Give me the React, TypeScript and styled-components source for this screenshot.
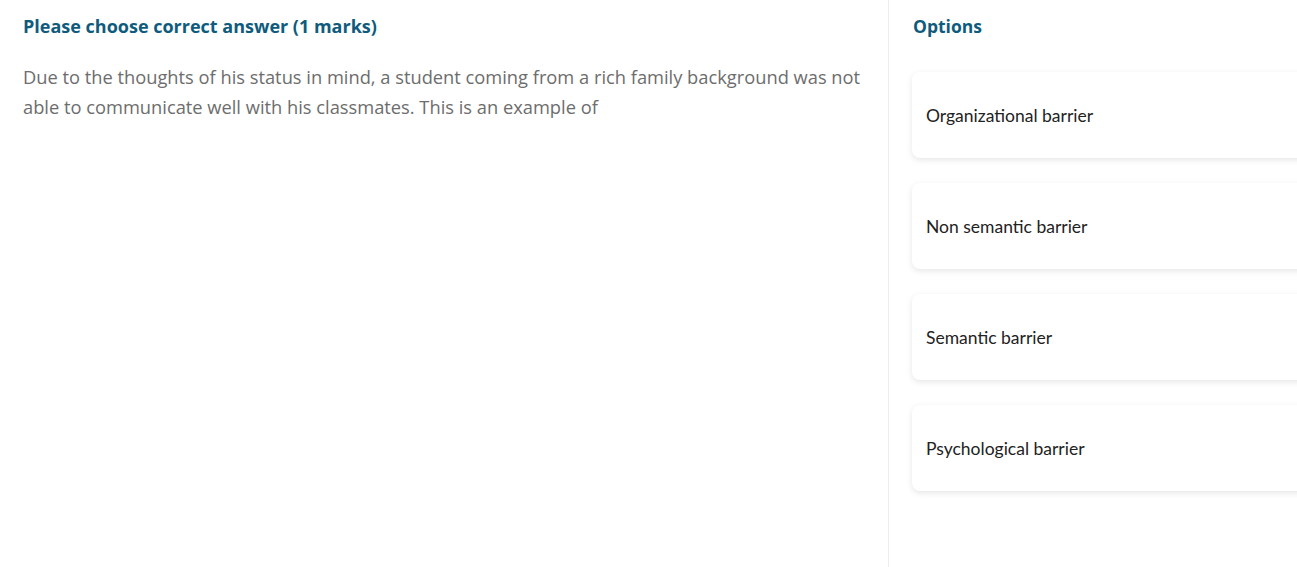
import React from 'react';
import styled, { createGlobalStyle } from 'styled-components';

const GlobalStyle = createGlobalStyle`
  html, body {
    margin: 0;
    padding: 0;
    background: #ffffff;
    overflow: hidden;
  }
  body {
    font-family: "Open Sans", "Noto Sans", sans-serif;
  }
`;

const Page = styled.div`
  display: flex;
  height: 100vh;
  width: 100vw;
  overflow: hidden;
  background: #ffffff;
`;

const QuestionPane = styled.section`
  flex: 0 0 889px;
  box-sizing: border-box;
  padding: 14px 24px 0 23px;
  border-right: 1px solid #ededed;
`;

const OptionsPane = styled.section`
  flex: 0 0 520px;
  box-sizing: border-box;
  padding: 14px 0 0 24px;
`;

const Heading = styled.h2<{ $size?: number }>`
  margin: 0;
  font-family: "Open Sans", sans-serif;
  font-size: ${(p) => p.$size ?? 18}px;
  font-weight: 700;
  line-height: 24px;
  color: #0f5b7d;
`;

const QuestionText = styled.p`
  margin: 24px 0 0;
  font-family: "Open Sans", sans-serif;
  font-size: 18.3px;
  line-height: 30px;
  color: #6d6d6d;
`;

const OptionList = styled.div`
  display: flex;
  flex-direction: column;
  gap: 25px;
  margin-top: 34px;
`;

const OptionCard = styled.button`
  display: flex;
  align-items: center;
  height: 86px;
  width: 100%;
  box-sizing: border-box;
  margin-left: -1px;
  padding: 0 14px;
  border: none;
  border-radius: 8px;
  background: #ffffff;
  box-shadow: 0 2px 6px rgba(0, 0, 0, 0.1);
  font-family: Lato, "Open Sans", sans-serif;
  font-size: 17.5px;
  color: #222222;
  text-align: left;
  cursor: pointer;
`;

const options = [
  'Organizational barrier',
  'Non semantic barrier',
  'Semantic barrier',
  'Psychological barrier',
];

export default function App() {
  return (
    <>
      <GlobalStyle />
      <Page>
        <QuestionPane>
          <Heading>Please choose correct answer (1 marks)</Heading>
          <QuestionText>
            Due to the thoughts of his status in mind, a student coming from a rich family background was not
            able to communicate well with his classmates. This is an example of
          </QuestionText>
        </QuestionPane>
        <OptionsPane>
          <Heading $size={17.5}>Options</Heading>
          <OptionList>
            {options.map((opt) => (
              <OptionCard key={opt}>{opt}</OptionCard>
            ))}
          </OptionList>
        </OptionsPane>
      </Page>
    </>
  );
}
